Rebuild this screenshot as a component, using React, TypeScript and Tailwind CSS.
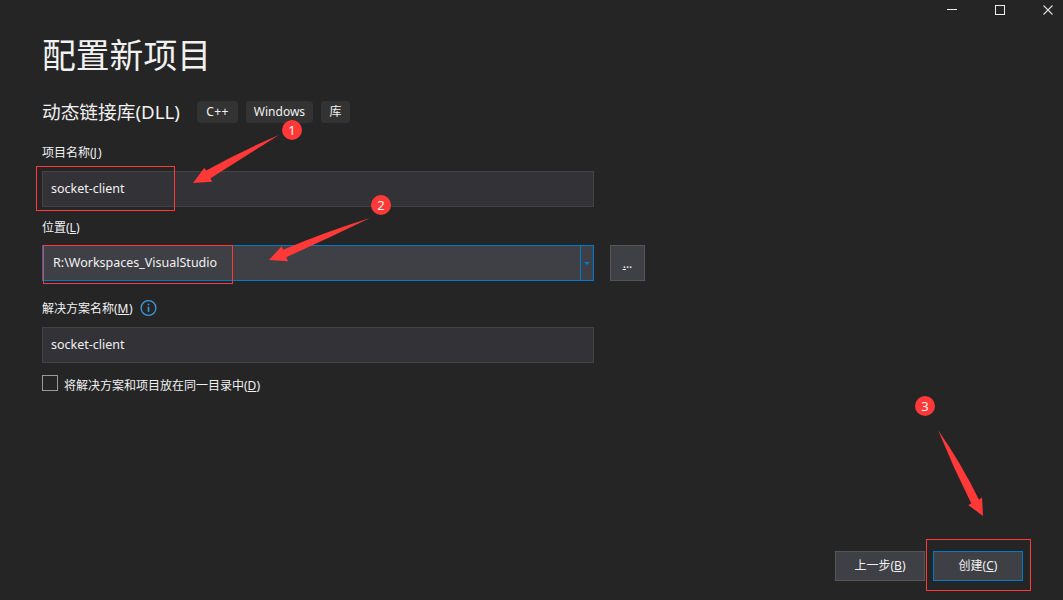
import type { ReactNode } from "react";

function Field({ children }: { children: ReactNode }) {
  return (
    <div className="flex h-9 w-[552px] items-center border border-[#434346] bg-[#333337] pl-2 text-[12.5px]">
      {children}
    </div>
  );
}

function Tag({ children, className }: { children: ReactNode; className: string }) {
  return (
    <span className={`flex h-[22px] items-center justify-center rounded-[4px] bg-[#333333] text-[12px] ${className}`}>
      {children}
    </span>
  );
}

function Badge({ children, className }: { children: ReactNode; className: string }) {
  return (
    <div className={`absolute flex size-5 items-center justify-center rounded-full bg-[#ff3838] text-[13px] leading-none ${className}`}>
      {children}
    </div>
  );
}

export default function App() {
  return (
    <main className="relative flex h-[600px] w-[1063px] flex-col overflow-hidden bg-[#252526] font-['Noto_Sans','Noto_Sans_CJK_SC',sans-serif] text-[12px] whitespace-nowrap text-[#f1f1f1]">
      <header className="flex h-5 shrink-0 justify-end">
        <svg width="116" height="20" fill="none" stroke="#f1f1f1">
          <path d="M0 9.5h10M48.5 5.5h9v9h-9z" shapeRendering="crispEdges" />
          <path d="M96.5 5.5l9 9M105.5 5.5l-9 9" stroke="#dedede" strokeWidth="1.1" />
        </svg>
      </header>

      <section className="flex flex-1 flex-col pl-[42px]">
        <h1 className="mt-3 h-[46px] text-[33.8px] leading-[46px]">配置新项目</h1>

        <div className="mt-[22px] flex h-6 items-center">
          <h2 className="w-[155px] text-[18.7px] leading-6">动态链接库(DLL)</h2>
          <div className="flex gap-2">
            <Tag className="w-[41px] tracking-[0.4px]">C++</Tag>
            <Tag className="w-[67px]">Windows</Tag>
            <Tag className="w-[29px]">库</Tag>
          </div>
        </div>

        <label className="mt-5 h-[27px] leading-[18px]">
          项目名称(<u className="tracking-[1px]">J</u>)
        </label>
        <Field>socket-client</Field>

        <label className="mt-3 h-[26px] leading-[18px]">
          位置(<u>L</u>)
        </label>
        <div className="flex gap-4">
          <div className="flex h-9 w-[552px] border border-[#007acc] bg-[#3f3f46]">
            <div className="flex flex-1 items-center pl-2.5 text-[12.5px]">R:\Workspaces_VisualStudio</div>
            <div className="flex w-[13px] items-center justify-center border-l border-[#007acc]">
              <svg width="6" height="3" viewBox="0 0 6 3">
                <path d="M0 0h6L3 3z" fill="#007acc" />
              </svg>
            </div>
          </div>
          <button className="flex h-9 w-[35px] items-center justify-center border border-[#555555] bg-[#3f3f46] pt-0.5">
            <span><u>.</u>..</span>
          </button>
        </div>

        <div className="mt-[18px] flex h-7 items-start leading-[18px]">
          <label className="pt-px">解决方案名称(<u className="tracking-[0.6px]">M</u>)</label>
          <svg className="ml-1.5" width="18" height="18" fill="none" stroke="#3c9be0" strokeWidth="1.3">
            <circle cx="9.5" cy="9" r="7.4" />
            <path d="M9.5 7.7v5M9.5 4.8v1.5" strokeWidth="1.6" />
          </svg>
        </div>
        <Field>socket-client</Field>

        <label className="mt-3 flex h-5 items-start leading-5">
          <span className="mr-1.5 size-4 border border-[#999999]" />
          <span className="pt-px">将解决方案和项目放在同一目录中(<u>D</u>)</span>
        </label>
      </section>

      <footer className="mb-[19px] flex justify-end gap-2 pr-10">
        <button className="h-[30px] w-[90px] border border-[#555555] bg-[#3f3f46]">上一步(<u>B</u>)</button>
        <button className="h-[30px] w-[90px] border border-[#007acc] bg-[#3f3f46]">创建(<u>C</u>)</button>
      </footer>

      <div className="absolute top-[166px] left-[36px] h-[45px] w-[139px] border border-[#ff3838]" />
      <div className="absolute top-[245px] left-[43px] h-[39px] w-[190px] border border-[#ff3838]" />
      <div className="absolute top-[539px] left-[926px] h-[52px] w-[105px] border border-[#ff3838]" />

      <svg className="pointer-events-none absolute inset-0" width="1063" height="600" fill="#ff3838">
        <path d="M279 135Q241 151 206.300 170.500L204.200 168L193 183L212.200 181.700L210.500 178.300Q246 156 279 135Z" />
        <path d="M370 218Q325 232 283.200 249.700L281.700 246.200L269 260L288 261.200L286.300 257.200Q329 238 370 218Z" />
        <path d="M938 430Q961 463 979 499.700L982 497.200L983 516L968.200 505L971.300 503.400Q953 467 938 430Z" />
      </svg>
      <Badge className="top-[120px] left-[282px]">1</Badge>
      <Badge className="top-[195px] left-[371px]">2</Badge>
      <Badge className="top-[396px] left-[915px]">3</Badge>
    </main>
  );
}
